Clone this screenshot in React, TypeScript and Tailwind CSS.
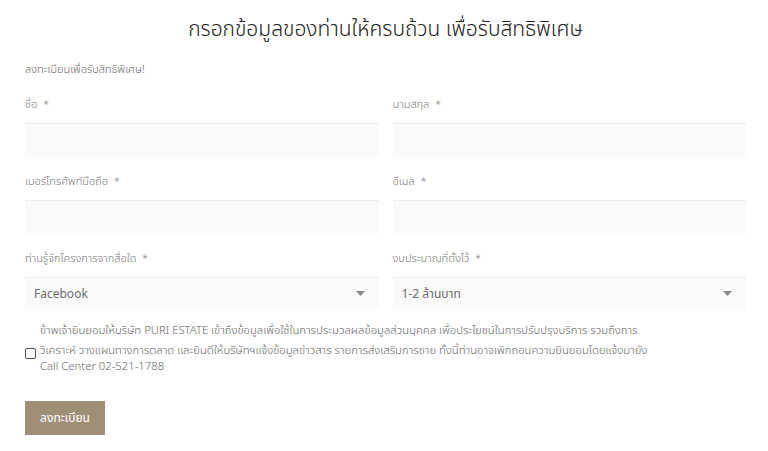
import React from 'react'

const font = { fontFamily: '"Noto Sans Thai", "Noto Sans", "Liberation Sans", sans-serif' }

function Field({ label }: { label: string }) {
  return (
    <div className="flex flex-col">
      <label className="text-[11px] font-light leading-4 text-[#777]">{label}&nbsp; *</label>
      <input className="mt-[10px] h-[33px] w-full border-t border-[#ececec] bg-[#fafafa] px-2 text-[12px] outline-none" />
    </div>
  )
}

function SelectField({ label, value }: { label: string; value: string }) {
  return (
    <div className="flex flex-col">
      <label className="text-[11px] font-light leading-4 text-[#777]">{label}&nbsp; *</label>
      <div className="mt-[10px] flex h-[32px] items-center justify-between border-t border-[#ececec] bg-[#fafafa] pl-[9px] pr-[14px]">
        <span className="text-[12px] text-[#6a6a6a]">{value}</span>
        <svg width="9" height="5" viewBox="0 0 9 5">
          <path d="M0 0h9L4.5 5z" fill="#8a8a8a" />
        </svg>
      </div>
    </div>
  )
}

export default function App() {
  return (
    <div className="min-h-screen bg-white px-[25px] pr-[22px]" style={font}>
      <h1 className="pt-[16px] text-center text-[21px] font-light leading-[28px] text-[#222]">
        กรอกข้อมูลของท่านให้ครบถ้วน เพื่อรับสิทธิพิเศษ
      </h1>
      <p className="mt-[18px] text-[11px] font-light leading-4 text-[#666]">ลงทะเบียนเพื่อรับสิทธิพิเศษ!</p>

      <div className="mt-[19px] grid grid-cols-2 gap-x-[14px] gap-y-[18px]">
        <Field label="ชื่อ" />
        <Field label="นามสกุล" />
        <Field label="เบอร์โทรศัพท์มือถือ" />
        <Field label="อีเมล" />
        <SelectField label="ท่านรู้จักโครงการจากสื่อใด" value="Facebook" />
        <SelectField label="งบประมาณที่ตั้งไว้" value="1-2 ล้านบาท" />
      </div>

      <div className="mt-[14px] flex items-center gap-[4px]">
        <span className="mt-[8px] h-[11px] w-[11px] shrink-0 rounded-[2px] border border-[#555]" />
        <div className="text-[11.3px] font-light leading-4 text-[#666]">
          <p>ข้าพเจ้ายินยอมให้บริษัท PURI ESTATE เข้าถึงข้อมูลเพื่อใช้ในการประมวลผลข้อมูลส่วนบุคคล เพื่อประโยชน์ในการปรับปรุงบริการ รวมถึงการ</p>
          <p className="mt-[4px]">วิเคราะห์ วางแผนทางการตลาด และยินดีให้บริษัทฯแจ้งข้อมูลข่าวสาร รายการส่งเสริมการขาย ทั้งนี้ท่านอาจเพิกถอนความยินยอมโดยแจ้งมายัง</p>
          <p>Call Center 02-521-1788</p>
        </div>
      </div>

      <button className="mt-[26px] h-[34px] w-[80px] bg-[#a08f77] text-[12px] text-white">ลงทะเบียน</button>
    </div>
  )
}
